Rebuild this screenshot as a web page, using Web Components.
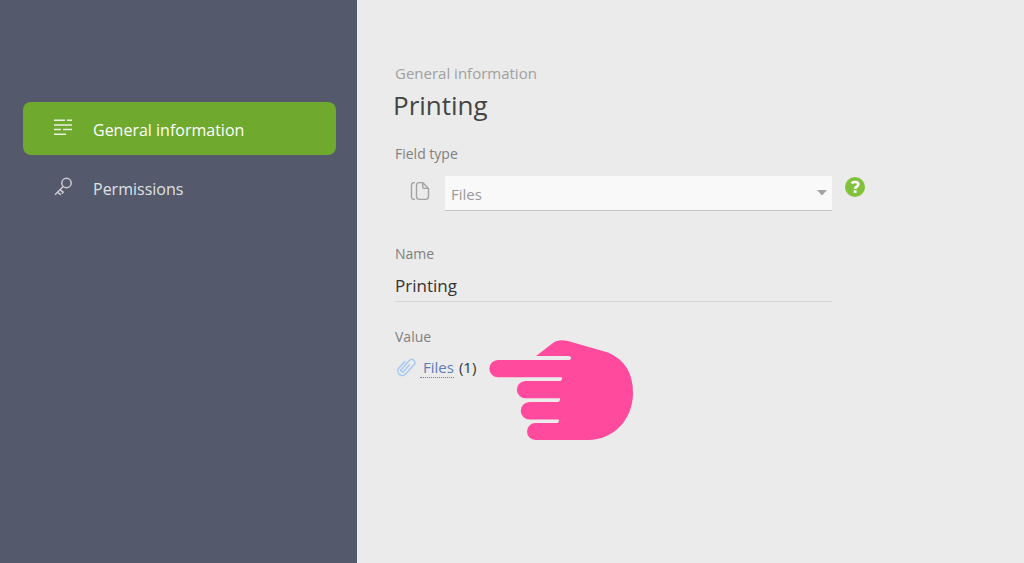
<!DOCTYPE html>
<html lang="en">
<head>
<meta charset="utf-8">
<title>Printing – General information</title>
<style>
  html, body { height: 100%; margin: 0; }
  body { font-family: "Open Sans", "Noto Sans", sans-serif; font-size: 15px; color: #444; background: #ebebeb; }
</style>
</head>
<body>
<app-shell>
  <side-nav slot="nav">
    <nav-item active>
      <svg slot="icon" width="20" height="20" viewBox="0 0 20 20" fill="none" stroke="currentColor" stroke-width="1.5"><path d="M1 2.2h11M14 2.2h5M1 6.9h18M1 11.6h7M10 11.6h9M1 16.3h12"/></svg>
      General information
    </nav-item>
    <nav-item>
      <svg slot="icon" width="20" height="20" viewBox="0 0 20 20" fill="none" stroke="currentColor" stroke-width="1.5"><circle cx="13.5" cy="6" r="4.7"/><path d="M10.2 9.5L2 17.8M7 12.8l3.2 2.4-1.4 1.4M4.6 15.2l3.2 2.6"/></svg>
      Permissions
    </nav-item>
  </side-nav>
  <field-editor></field-editor>
</app-shell>

<script>
const define = (name, html, setup) => customElements.define(name, class extends HTMLElement {
  connectedCallback() {
    if (this.shadowRoot) return;
    this.attachShadow({ mode: "open" }).innerHTML = html;
    if (setup) setup(this);
  }
});

define("app-shell", `
  <style>
    :host { display: flex; min-height: 100vh; }
    aside { flex: 0 0 357px; background: #54596b; }
    main { flex: 1; min-width: 0; padding: 61px 38px 40px; box-sizing: border-box; }
  </style>
  <aside><slot name="nav"></slot></aside>
  <main><slot></slot></main>`);

define("side-nav", `
  <style>
    :host { display: block; }
    nav { display: flex; flex-direction: column; gap: 6px; padding: 102px 21px 0 23px; }
  </style>
  <nav aria-label="Field settings"><slot></slot></nav>`);

define("nav-item", `
  <style>
    :host { display: block; color: #dfe1e5; }
    a { display: flex; align-items: center; gap: 20px; height: 53px; padding: 0 30px;
        border-radius: 8px; color: inherit; text-decoration: none; font-size: 16px; line-height: 24px; }
    :host([active]) { color: #fff; }
    :host([active]) a { background: #6fa92e; }
    .icon { display: flex; padding-bottom: 2px; opacity: .85; }
    .text { padding-top: 2px; }
  </style>
  <a href="#"><span class="icon"><slot name="icon"></slot></span><span class="text"><slot></slot></span></a>`,
  el => { if (el.hasAttribute("active")) el.shadowRoot.querySelector("a").setAttribute("aria-current", "page"); });

define("page-heading", `
  <style>
    :host { display: block; }
    p { margin: 0; font-size: 15px; line-height: 24px; color: #a0a0a0; }
    h1 { margin: 0 0 0 -2px; font-size: 26px; line-height: 40px; font-weight: 400; color: #444; }
  </style>
  <p><slot name="section"></slot></p>
  <h1><slot></slot></h1>`);

define("type-field", `
  <style>
    :host { display: block; }
    label { display: block; font-size: 14px; line-height: 20px; color: #808080; }
    .row { display: flex; align-items: center; margin-top: 12px; }
    .kind { flex: 0 0 50px; display: flex; box-sizing: border-box; padding: 0 0 6px 15px; }
    .pick { flex: 1; position: relative; }
    select { appearance: none; display: block; width: 100%; height: 35px; box-sizing: border-box; margin: 0; padding: 2px 24px 0 6px;
      border: 0; border-bottom: 1px solid #c4c4c4; border-radius: 0; background: #f9f9f9; font: inherit; font-size: 15px; color: #999; }
    .arrow { position: absolute; right: 5px; top: 14px; pointer-events: none; }
    button { flex: 0 0 20px; height: 20px; margin: 0 0 13px 13px; padding: 0; border: 0; border-radius: 50%;
      background: #82c13c; color: #fff; display: flex; }
  </style>
  <label for="type">Field type</label>
  <div class="row">
    <span class="kind"><svg width="20" height="20" viewBox="0 0 20 20" fill="none" stroke="#a3a3a3" stroke-width="1.4" stroke-linejoin="round"><path d="M5 1.600H4Q1.500 1.600 1.500 4.500v11q0 2.900 2.500 2.900H5M12.700 1.600H9.400q-2.900 0-2.900 2.900v11q0 2.900 2.900 2.900h6.200q2.900 0 2.900-2.900V7.400zM12.700 1.600v3.800q0 2 2 2h3.800"/></svg></span>
    <div class="pick">
      <select id="type"><option>Files</option></select>
      <svg class="arrow" width="10" height="6" viewBox="0 0 10 6"><path d="M0 0h10L5 5.5z" fill="#a3a3a3"/></svg>
    </div>
    <button type="button" aria-label="Help"><svg width="20" height="20" viewBox="0 0 20 20" fill="none" stroke="#fff" stroke-width="2.6"><path d="M6.500 6.200Q8 5 10 5c2.300 0 3.300.9 3.300 2.300 0 2.500-3.200 2-3.200 4.700"/><path d="M8.700 14.600h2.800"/></svg></button>
  </div>`);

define("text-field", `
  <style>
    :host { display: block; }
    label { display: block; font-size: 14px; line-height: 20px; color: #808080; }
    input { display: block; width: 100%; height: 30px; box-sizing: border-box; margin: 8px 0 0; padding: 0 0 2px; border: 0;
      border-bottom: 1px solid #d6d6d6; background: none; font: inherit; font-size: 17px; color: #333; }
  </style>
  <label for="text"><slot></slot></label>
  <input id="text" type="text">`,
  el => { el.shadowRoot.querySelector("input").value = el.getAttribute("value") || ""; });

define("files-value", `
  <style>
    :host { display: block; }
    h2 { margin: 0; font-size: 14px; font-weight: 400; line-height: 20px; color: #808080; }
    .row { display: flex; align-items: center; margin-top: 8px; font-size: 15px; line-height: 20px; color: #333; }
    .clip { margin: 0 4px 0 1px; }
    a { padding: 0 0 0 3px; border-bottom: 1px dotted #5b83b4; color: #5b7db4; text-decoration: none; }
    .count { margin-left: 5px; }
    .wrap { position: relative; }
    .hand { position: absolute; left: 100%; top: -17px; margin-left: 13px; }
  </style>
  <h2>Value</h2>
  <div class="row">
    <svg class="clip" width="20" height="24" viewBox="0 0 20 24" fill="none" stroke="#a5c9f5" stroke-width="1.5" stroke-linecap="round"><path transform="translate(10 12) rotate(42)" d="M-4.500-3V5.500a4.500 4.500 0 0 0 9 0V-7a3.200 3.200 0 0 0-6.400 0V5a1.500 1.500 0 0 0 3 0V-4"/></svg>
    <span class="wrap"><a href="#">Files</a><span class="count">(1)</span>
      <svg class="hand" width="144" height="100" viewBox="0 0 144 100" fill="#ff4a9e" aria-hidden="true"><path d="M47 16L64 3Q69-1 78 0.700L119 12.500Q144 23 144 53C144 79 125 100 99 100H46.500A8.500 8.500 0 0 1 46.500 83H68Q70 83 70 79.500H40.500A8.750 8.750 0 0 1 40.500 62H69Q71 62 71 58.300H36.500A8.500 8.500 0 0 1 36.500 41H71Q73 41 73 37.300H9A8.600 8.600 0 0 1 9 20H79Q82 20 82 18Q82 16 79 16Z"/></svg>
    </span>
  </div>`);

define("field-editor", `
  <style>
    :host { display: block; max-width: 470px; }
    type-field { margin-top: 19px; }
    text-field { margin: 33px 33px 0 0; }
    files-value { margin-top: 25px; }
  </style>
  <page-heading><span slot="section">General information</span>Printing</page-heading>
  <type-field></type-field>
  <text-field value="Printing">Name</text-field>
  <files-value></files-value>`);
</script>
</body>
</html>
